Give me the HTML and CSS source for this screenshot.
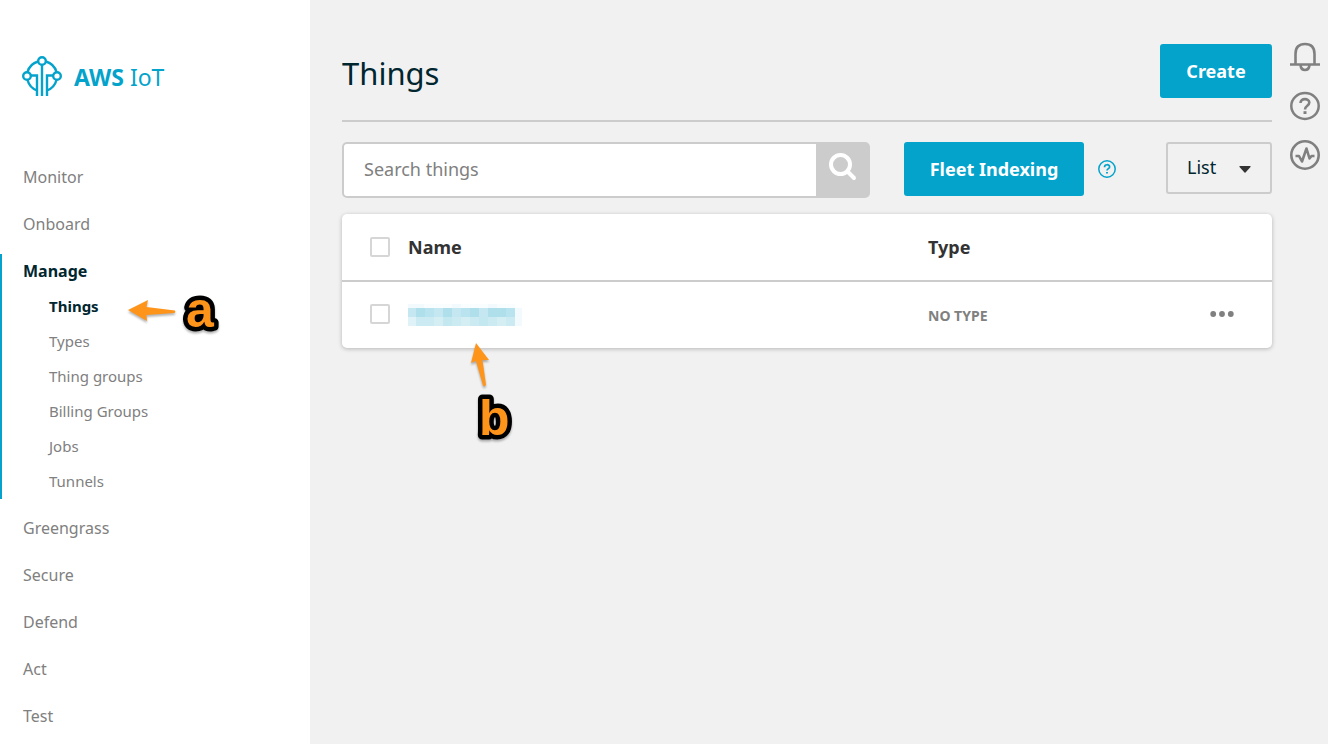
FILE: index.html
```html
<!DOCTYPE html>
<html lang="en">
<head>
<meta charset="utf-8">
<title>AWS IoT - Things</title>
<link rel="stylesheet" href="styles.css">
</head>
<body>
<div class="app">
  <aside class="sidebar">
    <a class="brand" href="#">
      <svg class="brand-icon" viewBox="0 0 40 40" fill="none" stroke="currentColor" stroke-width="2.400" aria-hidden="true">
        <path d="M16 5.500A15.500 15.500 0 0 0 5.500 16M24 5.500A15.500 15.500 0 0 1 34.500 16M5.500 24A15.500 15.500 0 0 0 15 34.500M34.500 24A15.500 15.500 0 0 1 25 34.500"/>
        <circle cx="20" cy="5" r="3.800"/><circle cx="5" cy="20" r="3.800"/><circle cx="35" cy="20" r="3.800"/>
        <path d="M20 9V40M9 19.500H15V40M31 19.500H25V40"/>
      </svg>
      <span class="brand-name"><b>AWS</b> IoT</span>
    </a>
    <nav class="nav">
      <a class="nav-item" href="#">Monitor</a>
      <a class="nav-item" href="#">Onboard</a>
      <div class="nav-group">
        <a class="nav-head" href="#">Manage</a>
        <a class="nav-sub current" href="#">Things</a>
        <a class="nav-sub" href="#">Types</a>
        <a class="nav-sub" href="#">Thing groups</a>
        <a class="nav-sub" href="#">Billing Groups</a>
        <a class="nav-sub" href="#">Jobs</a>
        <a class="nav-sub" href="#">Tunnels</a>
      </div>
      <a class="nav-item" href="#">Greengrass</a>
      <a class="nav-item" href="#">Secure</a>
      <a class="nav-item" href="#">Defend</a>
      <a class="nav-item" href="#">Act</a>
      <a class="nav-item" href="#">Test</a>
    </nav>
  </aside>

  <main class="main">
    <header class="page-head">
      <h1 class="title">Things</h1>
      <button class="btn create" type="button">Create</button>
    </header>
    <div class="toolbar">
      <form class="search">
        <input class="search-input" type="text" placeholder="Search things" aria-label="Search things">
        <button class="search-btn" type="button" aria-label="Search">
          <svg width="30" height="30" viewBox="0 0 30 30" fill="none" stroke="#fff" stroke-width="4" stroke-linecap="round" aria-hidden="true"><circle cx="12.500" cy="12.500" r="9.500"/><path d="M19.500 19.500L26 26"/></svg>
        </button>
      </form>
      <button class="btn fleet" type="button">Fleet Indexing</button>
      <button class="help" type="button" aria-label="Fleet indexing help">
        <svg width="18" height="18" viewBox="0 0 18 18" fill="none" stroke="currentColor" aria-hidden="true"><circle cx="9" cy="9" r="8.200" stroke-width="1.500"/><path d="M6.500 7.200C6.500 3.900 11.600 4 11.600 6.900C11.600 8.700 9 8.600 9 10.600" stroke-width="1.700"/><path d="M9 11.900V13.600" stroke-width="1.900"/></svg>
      </button>
      <div class="view">
        <select class="view-select" aria-label="View"><option>List</option><option>Card</option></select>
        <svg class="caret" width="12" height="7" viewBox="0 0 12 7" aria-hidden="true"><path d="M1 0H11Q12 0 11.500 1L6.500 6.500Q6 7 5.500 6.500L.5 1Q0 0 1 0Z" fill="#333"/></svg>
      </div>
    </div>
    <table class="things">
      <thead>
        <tr>
          <th class="c-check"><input class="check" type="checkbox" aria-label="Select all things"></th>
          <th class="c-name">Name</th>
          <th class="c-type">Type</th>
          <th class="c-more"></th>
        </tr>
      </thead>
      <tbody>
        <tr>
          <td class="c-check"><input class="check" type="checkbox" aria-label="Select thing"></td>
          <td class="c-name">
            <svg class="mosaic" width="114" height="23" viewBox="0 0 114 23" shape-rendering="crispEdges" role="img" aria-label="Hidden thing name">
              <path fill="#f3fafd" d="M0 0H16V4H0zM44 0H53V4H44zM80 0H89V4H80zM107 4H114V22H107z"/>
              <path fill="#fafdfe" d="M16 0H44V4H16zM53 0H80V4H53zM89 0H107V4H89z"/>
              <path fill="#c4e7f1" d="M0 4H107V13H0z"/>
              <path fill="#aedfeb" d="M8 4H17V13H8zM35 4H44V13H35zM62 4H71V13H62zM80 4H98V13H80z"/>
              <path fill="#bae3f0" d="M17 4H26V13H17zM53 4H62V13H53zM98 4H107V13H98z"/>
              <path fill="#cbeaf2" d="M0 13H107V22H0z"/>
              <path fill="#dff2f7" d="M0 13H8V22H0z"/>
              <path fill="#d5eef4" d="M26 13H35V22H26zM53 13H62V22H53zM89 13H98V22H89z"/>
              <path fill="#c3e8ef" d="M35 13H44V22H35zM71 13H80V22H71z"/>
            </svg>
          </td>
          <td class="c-type none">NO TYPE</td>
          <td class="c-more"><button class="more" type="button" aria-label="More actions"><svg width="24" height="8" viewBox="0 0 24 8" fill="#808080" aria-hidden="true"><circle cx="3.200" cy="4" r="2.900"/><circle cx="12" cy="4" r="2.900"/><circle cx="20.800" cy="4" r="2.900"/></svg></button></td>
        </tr>
      </tbody>
    </table>
  </main>

  <aside class="rail">
    <button class="rail-btn" type="button" aria-label="Notifications">
      <svg width="30" height="30" viewBox="0 0 30 30" fill="none" stroke="currentColor" stroke-width="2.600" aria-hidden="true"><path d="M0 22.500H30M5.500 22.500V12Q5.500 2 15 2T24.500 12V22.500M10.500 23Q11 28 15 28T19.500 23"/></svg>
    </button>
    <button class="rail-btn" type="button" aria-label="Help">
      <svg width="30" height="30" viewBox="0 0 30 30" fill="none" stroke="currentColor" stroke-width="2.500" aria-hidden="true"><ellipse cx="15" cy="15" rx="13.700" ry="12.900"/><path d="M10.500 12C10.500 6.800 19.300 7 19.300 11.600C19.300 14.900 15 14.500 15 18.500" stroke-width="2.600"/><path d="M15 20.200V23" stroke-width="3"/></svg>
    </button>
    <button class="rail-btn" type="button" aria-label="Activity">
      <svg width="30" height="30" viewBox="0 0 30 30" fill="none" stroke="currentColor" stroke-width="2.600" stroke-linejoin="round" aria-hidden="true"><circle cx="15" cy="15" r="13.700"/><path d="M5.500 16H9L12 21.500L16.500 8.500L19.500 18.500L21.500 16H24.500"/></svg>
    </button>
  </aside>

  <svg class="note note-a" width="100" height="60" viewBox="0 0 100 60" aria-hidden="true">
    <path class="arrow" d="M4 26L24 16L22.500 23L51 26.500Q52 28 50.500 29L22.500 31L23 37Z"/>
    <text class="letter" x="62" y="43">a</text>
  </svg>
  <svg class="note note-b" width="70" height="110" viewBox="0 0 70 110" aria-hidden="true">
    <path class="arrow" d="M16 2L29 19L22.500 19L26 44Q24.500 46 23 44.500L16 20L11 22Z"/>
    <text class="letter" x="19" y="94">b</text>
  </svg>
</div>
</body>
</html>
```
FILE: styles.css
```css
* { box-sizing: border-box; }
body {
  margin: 0;
  background: #f1f1f1;
  color: #00262f;
  font-family: "Noto Sans", "Open Sans", sans-serif;
}
a { color: inherit; text-decoration: none; }
button, input, select { font: inherit; margin: 0; }
button { border: 0; padding: 0; background: none; cursor: pointer; }
svg { display: block; }

.app { display: flex; position: relative; min-height: 100vh; overflow: hidden; }

.sidebar { flex: 0 0 310px; background: #fff; padding-top: 56px; }
.brand {
  display: flex;
  align-items: center;
  gap: 12px;
  height: 40px;
  margin: 0 22px 58px;
  color: #04a3cb;
}
.brand-icon { width: 40px; height: 40px; }
.brand-name { font-size: 23px; line-height: 40px; padding-top: 2px; }

.nav { color: #808080; font-size: 16px; }
.nav-item { display: block; padding-left: 23px; line-height: 47px; }
.nav-group { margin: 6px 0; border-left: 2px solid #04a3cb; }
.nav-head, .nav-sub { display: block; line-height: 35px; }
.nav-head { padding-left: 21px; color: #00262f; font-weight: 700; }
.nav-sub { padding-left: 47px; font-size: 15px; }
.current { color: #00262f; font-weight: 700; }

.main { flex: 1; min-width: 0; padding: 44px 18px 0 32px; }
.page-head {
  display: flex;
  justify-content: space-between;
  height: 78px;
  border-bottom: 2px solid #ccc;
}
.title { margin: 0; font-size: 31px; font-weight: 400; line-height: 58px; }
.btn {
  height: 54px;
  border-radius: 3px;
  background: #04a3cb;
  color: #fff;
  font-size: 18px;
  font-weight: 700;
}
.create { width: 112px; }
.fleet { width: 180px; margin-left: 34px; }

.toolbar { display: flex; align-items: flex-start; margin: 20px 0 16px; }
.search {
  display: flex;
  flex: 1;
  height: 56px;
  border: 2px solid #ccc;
  border-radius: 5px;
  background: #ccc;
  overflow: hidden;
}
.search-input {
  flex: 1;
  min-width: 0;
  border: 0;
  padding: 0 20px 2px;
  background: #fff;
  font-size: 18px;
}
.search-input::placeholder { color: #808080; opacity: 1; }
.search-btn { width: 52px; padding: 8px 0 0 12px; display: flex; }
.help { margin: 18px 50px 0 14px; color: #04a3cb; }
.view { position: relative; }
.view-select {
  appearance: none;
  width: 106px;
  height: 52px;
  border: 2px solid #ccc;
  border-radius: 3px;
  padding: 0 19px 2px;
  background: transparent;
  color: #00262f;
  font-size: 18px;
}
.caret { position: absolute; right: 21px; top: 24px; pointer-events: none; }

.things {
  width: 100%;
  table-layout: fixed;
  border-spacing: 0;
  border-radius: 5px;
  background: #fff;
  box-shadow: 0 1px 4px rgba(0, 0, 0, 0.25);
  color: #333;
  text-align: left;
}
.things th, .things td { height: 66px; padding: 0; vertical-align: middle; }
.things th { height: 68px; border-bottom: 2px solid #ccc; font-size: 18px; font-weight: 700; }
.c-check { width: 66px; }
.c-type { width: 282px; }
.c-more { width: 62px; }
.things .c-check { padding-left: 28px; }
.things td.c-check { padding-bottom: 2px; }
.things .none { color: #808080; font-size: 14px; font-weight: 700; }
.more { display: block; margin-bottom: 2px; }
.check {
  appearance: none;
  display: block;
  width: 20px;
  height: 20px;
  border: 2px solid #d6d6d6;
  border-radius: 2px;
  background: #fff;
}

.rail {
  flex: 0 0 38px;
  display: flex;
  flex-direction: column;
  align-items: flex-start;
  gap: 19px;
  padding-top: 42px;
  color: #808080;
}
.rail-btn { color: inherit; }

.note { position: absolute; overflow: visible; pointer-events: none; filter: drop-shadow(0 2px 1px rgba(0, 0, 0, 0.3)); }
.note-a { left: 124px; top: 284px; }
.note-b { left: 460px; top: 341px; }
.arrow { fill: #ff941a; }
.letter {
  fill: #ff941a;
  stroke: #000;
  stroke-width: 9px;
  stroke-linejoin: round;
  paint-order: stroke;
  font-family: "Liberation Sans", Arial, sans-serif;
  font-size: 50px;
  font-weight: 700;
}
```
